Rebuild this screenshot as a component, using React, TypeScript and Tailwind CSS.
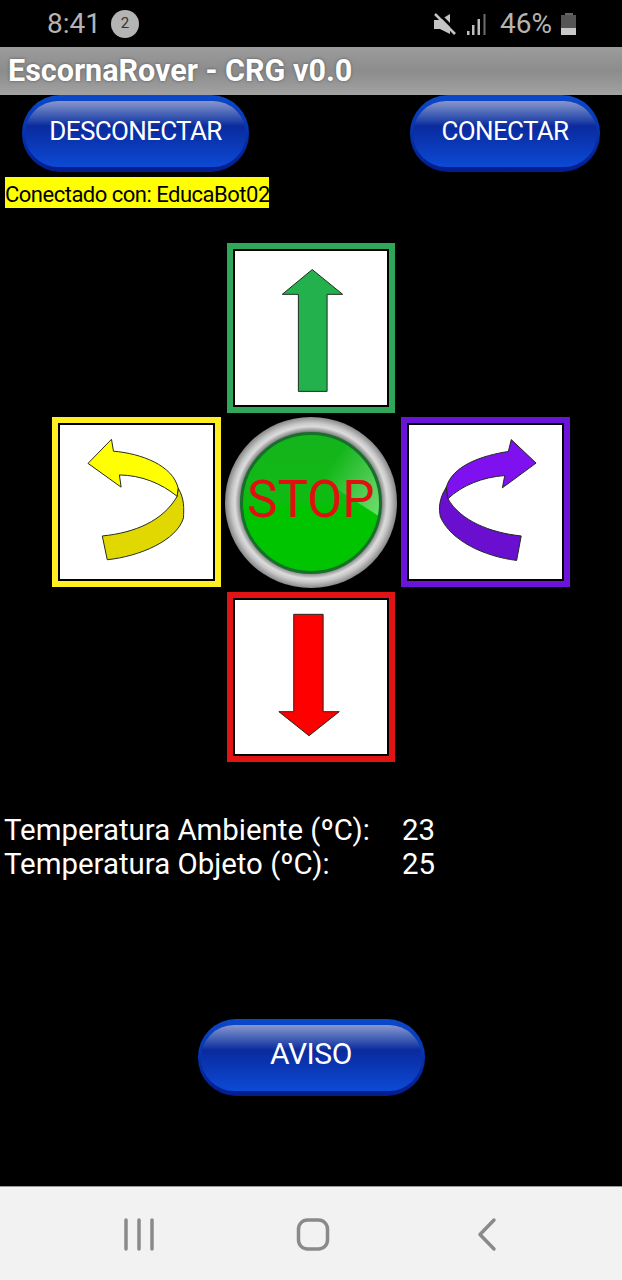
import { type ReactNode } from "react";

function GlossyButton({ label, className, textClass }: { label: string; className: string; textClass: string }) {
    return (
        <button className={`h-[77px] rounded-[38px] bg-linear-to-b from-[#0c48cc] to-[#031c8c] px-[3px] pt-[6px] pb-[5px] text-white ${className}`}>
            <span className={`flex h-full items-center justify-center rounded-[34px] bg-linear-to-b from-[#8a96cc] via-[#0a2a9e] via-38% to-[#0c4ad6] ${textClass}`}>
                {label}
            </span>
        </button>
    );
}

function Pad({ border, children }: { border: string; children: ReactNode }) {
    return (
        <div className={`h-[170px] border-[6px] ${border}`}>
            <div className="size-full border-2 border-black bg-white">{children}</div>
        </div>
    );
}

// all arrows are drawn in the 170x170 space of the pad's outer box, shifted by the 8px frame
function ArrowIcon({ children }: { children: ReactNode }) {
    return (
        <svg viewBox="8 8 154 154" className="size-full" stroke="#1f2a1f" strokeWidth="1" strokeLinejoin="miter">
            {children}
        </svg>
    );
}

export default function App() {
    return (
        <div className="flex h-[1280px] w-[622px] flex-col overflow-hidden bg-black font-['Roboto',sans-serif]">
            {/* Status bar */}
            <div className="flex h-[47px] items-center pl-[47px] pr-[46px] text-[28px] text-[#b4b4b4]">
                <span>8:41</span>
                <span className="ml-[10px] flex size-[28px] items-center justify-center rounded-full bg-[#b4b4b4] text-[15px] text-[#333]">
                    2
                </span>
                <svg viewBox="0 0 22 22" className="ml-auto size-[22px]">
                    <path fill="#c4c4c4" d="M0 7H6L16 1V21L6 16H0Z" />
                    <path d="M3 -1 23 19" stroke="#000" strokeWidth="3" />
                    <path d="M1 1 21 21" stroke="#c4c4c4" strokeWidth="2.5" />
                </svg>
                <svg viewBox="0 0 22 22" className="ml-[10px] size-[22px]" fill="#bdbdbd">
                    <rect x="1" y="18" width="2.5" height="4" />
                    <rect x="6" y="12" width="2.5" height="10" />
                    <rect x="11.5" y="6" width="2.5" height="16" />
                    <rect x="17.5" y="1" width="2" height="21" fill="#6e6e6e" />
                </svg>
                <span className="ml-[12px]">46%</span>
                <div className="ml-[9px] flex h-[22px] w-[15px] flex-col">
                    <div className="mx-auto h-[2px] w-[8px] bg-[#666]" />
                    <div className="h-[13px] bg-[#555]" />
                    <div className="flex-1 bg-[#c8c8c8]" />
                </div>
            </div>

            {/* Title bar */}
            <div className="flex h-[48px] items-center bg-linear-to-b from-[#9c9c9c] via-[#8c8c8c] to-[#a2a2a2] pl-[8px] text-[30.5px] font-bold text-white [text-shadow:0_0_3px_#555]">
                EscornaRover - CRG v0.0
            </div>

            {/* Connection buttons */}
            <div className="flex px-[22px] text-[26px] tracking-[-0.65px]">
                <GlossyButton label="DESCONECTAR" className="w-[227px]" textClass="pb-[6px]" />
                <GlossyButton label="CONECTAR" className="ml-auto w-[190px]" textClass="pb-[6px]" />
            </div>

            <div className="mt-[5px] ml-[5px] flex h-[31px] w-[264px] items-center bg-[#ffff00] pt-[3px] text-[22px] tracking-[-0.5px] whitespace-nowrap text-black">
                Conectado con: EducaBot02
            </div>

            {/* Direction pad */}
            <div className="mt-[35px] ml-[52px] grid w-[518px] grid-cols-[168.5px_168.5px_168.5px] gap-x-[6px] gap-y-[4px]">
                <div />
                <Pad border="border-[#2fa658]">
                    <ArrowIcon>
                        <path fill="#22b14c" d="M86 26 116.7 51H101V149H72V51H55.7Z" />
                    </ArrowIcon>
                </Pad>
                <div />

                <Pad border="border-[#ffee22]">
                    <ArrowIcon>
                        <path
                            fill="#e0d800"
                            d="M127.3 71C134 82 133 92 132.7 101C126 124 88 140 55.7 143.3L50.7 119.3C84 116 112 104 126.3 79.3Z"
                        />
                        <path
                            fill="#ffff00"
                            d="M36.3 46 60 21.7 62 33.7C90 36 122 48 127.3 71L126.3 79.3C110 66 90 58 68 57.7L69.7 70Z"
                        />
                    </ArrowIcon>
                </Pad>
                <div className="-mx-[1.5px] flex h-[171px] items-center justify-center rounded-full bg-[radial-gradient(circle_closest-side,#777_0%,#777_82%,#dcdcdc_89%,#c8c8c8_93%,#8a8a8a_100%)]">
                    <div className="relative flex size-[142px] items-center justify-center overflow-hidden rounded-full border-[3px] border-[#17702a] bg-linear-to-b from-[#14b41c] via-[#10ba14] via-45% to-[#00c400] to-55%">
                        <div className="absolute top-[-114px] left-[20px] h-[120px] w-[140px] origin-bottom-left rotate-[33deg] bg-linear-to-r from-transparent from-50% to-white/45" />
                        <span className="relative -top-[3px] text-[51px] leading-none text-[#e01010]">STOP</span>
                    </div>
                </div>
                <Pad border="border-[#6a14d8]">
                    <ArrowIcon>
                        <path
                            fill="#6a0fd0"
                            d="M45.7 70C38 82 38 92 39.7 100C50 124 84 140 116.7 144L121.3 119.3C90 116 60 104 47.3 81.7Z"
                        />
                        <path
                            fill="#7f10f0"
                            d="M136.3 45.7 111.3 22 108.3 34C82 38 52 48 45.7 70L47.3 81.7C62 68 82 60 104.7 58.3L102.3 70.7Z"
                        />
                    </ArrowIcon>
                </Pad>

                <div />
                <Pad border="border-[#e01414]">
                    <ArrowIcon>
                        <path fill="#ff0000" d="M67.3 21.7H97V120H113.3L82.7 144.3 52.3 120H67.3Z" />
                    </ArrowIcon>
                </Pad>
                <div />
            </div>

            {/* Temperature readings */}
            <div className="mt-[51px] ml-[4px] text-[29.4px] leading-[34px] text-white">
                <div className="flex">
                    <span className="w-[398px]">Temperatura Ambiente (ºC):</span>
                    <span>23</span>
                </div>
                <div className="flex">
                    <span className="w-[398px]">Temperatura Objeto (ºC):</span>
                    <span>25</span>
                </div>
            </div>

            <div className="mt-[138px] flex justify-center text-[30px] tracking-[-0.4px]">
                <GlossyButton label="AVISO" className="w-[227px]" textClass="pb-[10px]" />
            </div>

            {/* Android nav bar */}
            <div className="mt-auto flex h-[94px] items-center border-t border-t-[#999] bg-[#f2f2f2]">
                <svg viewBox="0 0 622 94" className="h-[94px] w-[622px]" fill="none" stroke="#8a8a8a" strokeLinecap="round">
                    <path d="M126 33V62M139 33V62M152 33V62" strokeWidth="3.5" />
                    <rect x="298.5" y="33" width="29" height="29" rx="9" strokeWidth="3.5" />
                    <path d="M494 33 480 47.5 494 62" strokeWidth="3.5" strokeLinejoin="round" />
                </svg>
            </div>
        </div>
    );
}
